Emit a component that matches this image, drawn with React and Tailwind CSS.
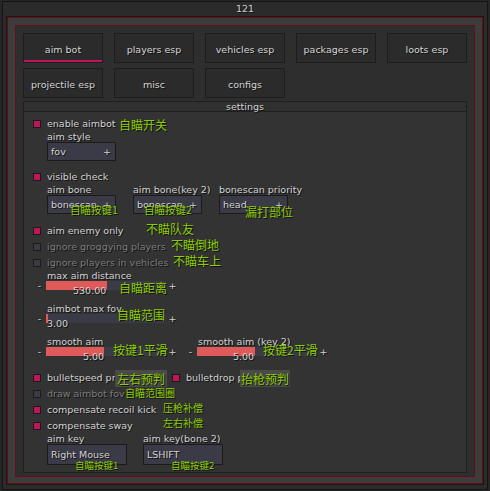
const box = "bg-[#3b3b47] border border-[#1b1b1b]";
const cjk = "font-['Noto_Sans_CJK_SC',sans-serif]";

function Tab({ active, children }) {
  return (
    <div
      className={`h-[30px] flex items-center justify-center pt-[5px] bg-[#2b2b2b] border border-[#1d1d1d] text-[#d4d4d4] ${
        active ? "shadow-[inset_0_-2px_0_#c3135b]" : ""
      }`}
    >
      {children}
    </div>
  );
}

function Check({ on, dim, children }) {
  return (
    <div className="h-[16px] flex items-center">
      <span className={`w-[8px] h-[8px] shrink-0 border border-[#1b1b1b] ${on ? "bg-[#c3135b]" : "bg-[#3b3b47]"}`} />
      <span className={`ml-[6px] leading-[10px] whitespace-nowrap ${dim ? "text-[#7c7c7c]" : "text-[#d2d2d2]"}`}>
        {children}
      </span>
    </div>
  );
}

function Combo({ label, value }) {
  return (
    <div className="w-[69px] flex flex-col">
      <div className="h-[10px] leading-[10px] whitespace-nowrap">{label}</div>
      <div className={`h-[19px] flex items-center justify-between px-[3px] ${box}`}>
        <span className="leading-[10px]">{value}</span>
        <span className="leading-[10px] pr-[1px]">+</span>
      </div>
    </div>
  );
}

function Slider({ label, fillClass, value, valueClass }) {
  return (
    <div className="flex flex-col">
      <div className="h-[10px] leading-[10px] ml-[14px] whitespace-nowrap">{label}</div>
      <div className="h-[9px] flex items-center">
        <span className="w-[13px] text-center leading-[9px]">-</span>
        <div className="relative w-[120px] h-[9px] bg-[#3b3b47]">
          <div className={`h-full bg-[#e05a5a] ${fillClass}`} />
          <span className={`absolute top-[5px] leading-[10px] ${valueClass}`}>{value}</span>
        </div>
        <span className="w-[13px] text-center leading-[9px]">+</span>
      </div>
    </div>
  );
}

function Note({ className, children }) {
  return (
    <span className={`absolute whitespace-nowrap leading-none text-[#8ccc00] ${cjk} ${className}`}>{children}</span>
  );
}

export default function App() {
  return (
    <div className="w-[490px] h-[491px] bg-[#262626] pt-[1px] px-[2px] font-['DejaVu_Sans',sans-serif] text-[9.5px] text-[#d2d2d2] [text-shadow:1px_1px_0_#111]">
      <div className="h-[489px] flex flex-col border border-[#141414] bg-[#2b2b2b] px-[3px] pb-[4px]">
        {/* title */}
        <div className="h-[14px] shrink-0 flex items-center justify-center leading-[10px] text-[#cfcfcf]">121</div>

        <div className="flex-1 min-h-0 border border-[#181818]">
          <div className="h-full border border-[#680d13] bg-[#3c3c3c] p-[7px] pb-[6px]">
            <div className="h-full flex flex-col border border-[#680d13] bg-[#2e2e2e] px-[7px] pt-[7px] pb-[3px]">
              {/* tabs */}
              <div className="grid grid-cols-5 gap-x-[11px] gap-y-[5px]">
                <Tab active>aim bot</Tab>
                <Tab>players esp</Tab>
                <Tab>vehicles esp</Tab>
                <Tab>packages esp</Tab>
                <Tab>loots esp</Tab>
                <Tab>projectile esp</Tab>
                <Tab>misc</Tab>
                <Tab>configs</Tab>
              </div>

              {/* settings */}
              <div className="flex-1 min-h-0 mt-[3px] flex flex-col border border-[#1f1f1f] bg-[#333333]">
                <div className="h-[10px] shrink-0 border-b border-[#1f1f1f] bg-[#303030] flex items-center justify-center leading-[10px] pt-[1px]">
                  settings
                </div>

                <div className="relative flex-1 flex flex-col pl-[9px] pt-[4px]">
                  <Check on>enable aimbot</Check>
                  <div className="ml-[14px]">
                    <Combo label="aim style" value="fov" />
                  </div>

                  <div className="mt-[8px]">
                    <Check on>visible check</Check>
                  </div>
                  <div className="ml-[14px] flex gap-[17px]">
                    <Combo label="aim bone" value="bonescan" />
                    <Combo label="aim bone(key 2)" value="bonescan" />
                    <Combo label="bonescan priority" value="head" />
                  </div>

                  <div className="mt-[9px]">
                    <Check on>aim enemy only</Check>
                  </div>
                  <Check dim>ignore groggying players</Check>
                  <Check dim>ignore players in vehicles</Check>

                  <Slider label="max aim distance" fillClass="w-[61px]" value="530.00" valueClass="left-[27px]" />
                  <div className="mt-[14px]">
                    <Slider label="aimbot max fov" fillClass="w-[2px]" value="3.00" valueClass="left-[1px]" />
                  </div>
                  <div className="mt-[14px] flex gap-[5px]">
                    <Slider label="smooth aim" fillClass="w-[58px]" value="5.00" valueClass="left-[37px]" />
                    <Slider label="smooth aim (key 2)" fillClass="w-[58px]" value="5.00" valueClass="left-[36px]" />
                  </div>

                  <div className="mt-[14px] flex">
                    <div className="w-[139px]">
                      <Check on>bulletspeed prediction</Check>
                    </div>
                    <Check on>bulletdrop prediction</Check>
                  </div>
                  <Check dim>draw aimbot fov</Check>
                  <Check on>compensate recoil kick</Check>
                  <Check on>compensate sway</Check>

                  <div className="ml-[14px] flex gap-[16px]">
                    <div className="w-[80px] flex flex-col">
                      <div className="h-[10px] leading-[10px] whitespace-nowrap">aim key</div>
                      <div className={`h-[21px] flex items-center px-[3px] ${box}`}>
                        <span className="leading-[10px]">Right Mouse</span>
                      </div>
                    </div>
                    <div className="w-[80px] flex flex-col">
                      <div className="h-[10px] leading-[10px] whitespace-nowrap">aim key(bone 2)</div>
                      <div className={`h-[21px] flex items-center px-[3px] ${box}`}>
                        <span className="leading-[10px]">LSHIFT</span>
                      </div>
                    </div>
                  </div>

                  {/* annotations pasted over the menu */}
                  <Note className="left-[95px] top-[7px] text-[12px]">自瞄开关</Note>
                  <Note className="left-[46px] top-[93px] text-[10.5px]">自瞄按键1</Note>
                  <Note className="left-[120px] top-[93px] text-[10.5px]">自瞄按键2</Note>
                  <Note className="left-[221px] top-[94px] text-[12px]">漏打部位</Note>
                  <Note className="left-[122px] top-[111px] text-[12px]">不瞄队友</Note>
                  <Note className="left-[147px] top-[127px] text-[12px]">不瞄倒地</Note>
                  <Note className="left-[149px] top-[143px] text-[12px]">不瞄车上</Note>
                  <Note className="left-[95px] top-[170px] text-[12px]">自瞄距离</Note>
                  <Note className="left-[93px] top-[197px] text-[12px]">自瞄范围</Note>
                  <Note className="left-[89px] top-[232px] text-[12px]">按键1平滑</Note>
                  <Note className="left-[239px] top-[232px] text-[12px]">按键2平滑</Note>
                  <Note className="left-[91px] top-[258px] w-[52px] h-[17px] flex items-center justify-center bg-[#4a4a48] text-[12px]">
                    左右预判
                  </Note>
                  <Note className="left-[216px] top-[258px] w-[50px] h-[17px] flex items-center justify-center bg-[#4a4a48] text-[12px]">
                    抬枪预判
                  </Note>
                  <Note className="left-[101px] top-[276px] text-[10px]">自瞄范围圈</Note>
                  <Note className="left-[139px] top-[291px] text-[10px]">压枪补偿</Note>
                  <Note className="left-[139px] top-[306px] text-[10px]">左右补偿</Note>
                  <Note className="left-[51px] top-[349px] text-[9.5px]">自瞄按键1</Note>
                  <Note className="left-[147px] top-[349px] text-[9.5px]">自瞄按键2</Note>
                </div>
              </div>
            </div>
          </div>
        </div>
      </div>
    </div>
  );
}
